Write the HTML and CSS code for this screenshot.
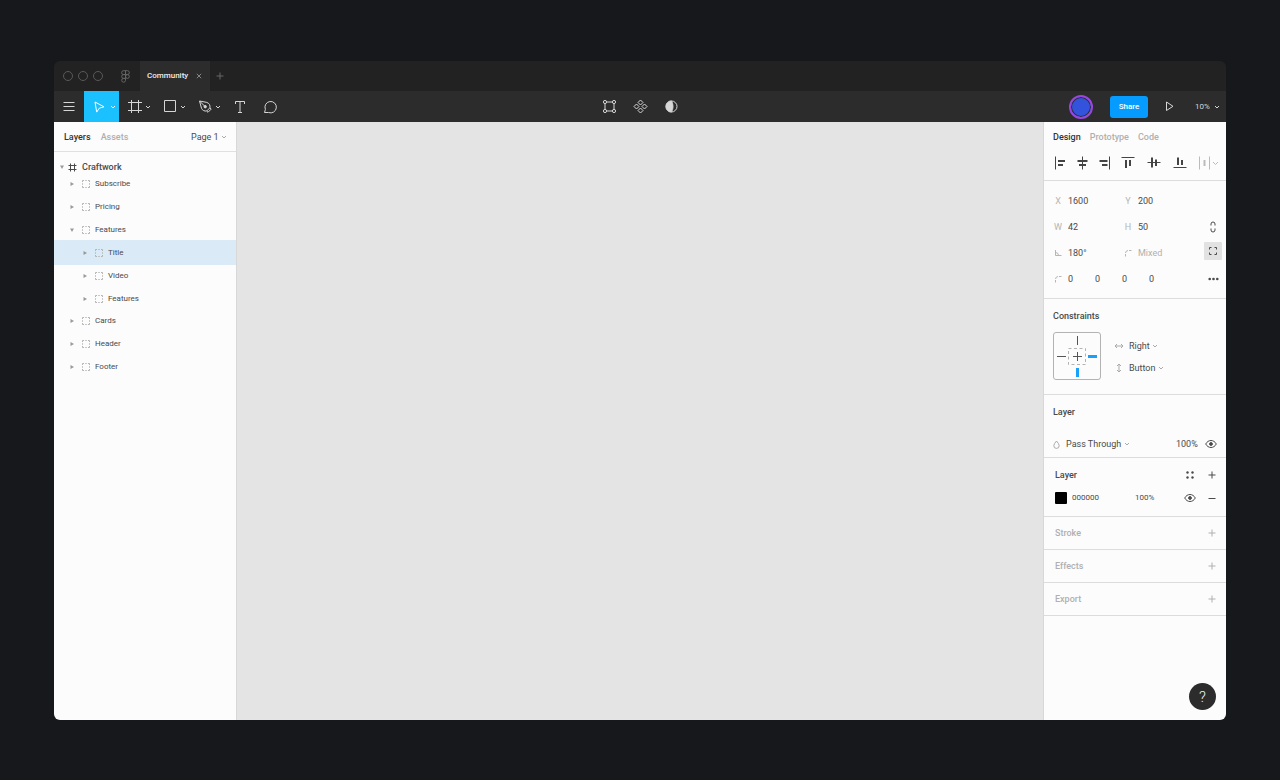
FILE: index.html
```html
<!DOCTYPE html>
<html lang="en">
<head>
<meta charset="utf-8">
<title>Community</title>
<link rel="stylesheet" href="styles.css">
</head>
<body>
<svg class="defs" aria-hidden="true">
  <symbol id="chevron" viewBox="0 0 6 6"><path d="M1 2l2 2 2-2"/></symbol>
  <symbol id="group" viewBox="0 0 10 10"><path d="M1.500 3V1.500H3M4.300 1.500h1.400M7 1.500h1.500V3M8.500 4.300v1.400M8.500 7v1.500H7M5.700 8.500H4.300M3 8.500H1.500V7M1.500 5.700V4.300"/></symbol>
  <symbol id="right" viewBox="0 0 6 6"><path d="M1.500 1l3.500 2-3.500 2z"/></symbol>
  <symbol id="down" viewBox="0 0 6 6"><path d="M1 1.500h4l-2 3.500z"/></symbol>
  <symbol id="eye" viewBox="0 0 12 10"><path d="M.7 5C2 2.700 3.900 1.500 6 1.500S10 2.700 11.300 5C10 7.300 8.100 8.500 6 8.500S2 7.300.7 5z"/><circle cx="6" cy="5" r="1.400" fill="currentColor"/></symbol>
  <symbol id="plus" viewBox="0 0 8 8"><path d="M4 .5v7M.5 4h7"/></symbol>
  <symbol id="corner" viewBox="0 0 8 8"><path d="M1.500 7.500V5M1.500 4Q1.700 1.700 4 1.500M5 1.500h2.500"/></symbol>
</svg>

<main class="window">
  <header class="titlebar">
    <div class="lights"><i></i><i></i><i></i></div>
    <button class="home" aria-label="Home"><svg width="9" height="13" viewBox="0 0 9 13"><path d="M4.500.7H2.600a1.900 1.900 0 0 0 0 3.900h1.900zM4.500.7h1.900a1.900 1.900 0 0 1 0 3.900H4.500zM4.500 4.600H2.600a1.900 1.900 0 0 0 0 3.800h1.900zM2.600 8.400a1.900 1.900 0 1 0 1.900 1.900V8.400z"/><circle cx="6.400" cy="6.500" r="1.900"/></svg></button>
    <div class="tab"><span>Community</span><button aria-label="Close tab"><svg width="6" height="6" viewBox="0 0 6 6"><path d="M.8.8l4.400 4.400M5.200.8L.8 5.200"/></svg></button></div>
    <button class="newtab" aria-label="New tab"><svg width="8" height="8"><use href="#plus"/></svg></button>
  </header>

  <nav class="toolbar">
    <div class="tools">
      <button class="menu" aria-label="Menu"><svg width="12" height="10" viewBox="0 0 12 10"><path d="M.5 .5h11M.5 4.500h11M.5 8.500h11"/></svg></button>
      <button class="tool active" aria-label="Move"><svg width="16" height="16" viewBox="0 0 16 16"><path d="M3 3l9 4.800-4.700 1.400-2.600 3.900z"/></svg><svg width="6" height="6"><use href="#chevron"/></svg></button>
      <button class="tool" aria-label="Frame"><svg width="16" height="16" viewBox="0 0 16 16"><path d="M4.500 1v13M11.500 1v13M1 3.500h14M1 11.500h14"/></svg><svg width="6" height="6"><use href="#chevron"/></svg></button>
      <button class="tool" aria-label="Rectangle"><svg width="16" height="16" viewBox="0 0 16 16"><path d="M2.500 1.500h11v11h-11z"/></svg><svg width="6" height="6"><use href="#chevron"/></svg></button>
      <button class="tool" aria-label="Pen"><svg width="16" height="16" viewBox="0 0 16 16"><path d="M2.500 2l7.300 1.400c2.600.8 3.600 3.200 3.100 5.400L9.700 12c-2.200.4-4.300-.6-5.200-2.700zM2.500 2l5 5M9.700 12l1.300 1.300 3.200-3.200-1.300-1.300"/><circle cx="8.200" cy="7.700" r="1.200" fill="currentColor"/></svg><svg width="6" height="6"><use href="#chevron"/></svg></button>
      <button class="single" aria-label="Text"><svg width="12" height="14" viewBox="0 0 12 14"><path d="M1.500 4V1.500h9V4M6 1.500v11M4 12.500h4"/></svg></button>
      <button class="single" aria-label="Comment"><svg width="15" height="14" viewBox="0 0 15 14"><path d="M1.500 12.500l.9-3.100a5.700 5.700 0 1 1 3.200 3.100z"/></svg></button>
    </div>
    <div class="modes">
      <button aria-label="Edit object"><svg width="15" height="15" viewBox="0 0 15 15"><circle cx="3" cy="3" r="1.600"/><circle cx="12" cy="3" r="1.600"/><circle cx="3" cy="12" r="1.600"/><circle cx="12" cy="12" r="1.600"/><path d="M4.600 3h5.800M4.600 12h5.800M3 4.600v5.800M12 4.600v5.800"/></svg></button>
      <button aria-label="Component"><svg width="15" height="15" viewBox="0 0 15 15"><path d="M7.500 1L10 3.500 7.500 6 5 3.500zM7.500 9l2.500 2.500L7.500 14 5 11.500zM3.500 5L6 7.500 3.500 10 1 7.500zM11.500 5L14 7.500 11.500 10 9 7.500z"/></svg></button>
      <button aria-label="Mask"><svg width="15" height="15" viewBox="0 0 15 15"><circle cx="7.500" cy="7.500" r="5.500"/><path fill="currentColor" d="M7.500 2a5.500 5.500 0 0 0 0 11q1.500-2.500 1.500-5.500t-1.500-5.500z"/></svg></button>
    </div>
    <div class="session">
      <button class="avatar" aria-label="Account"></button>
      <button class="share">Share</button>
      <button class="play" aria-label="Present"><svg width="9" height="11" viewBox="0 0 9 11"><path d="M1.500 1l6.500 4.300-6.500 4.200z"/></svg></button>
      <label class="pick"><select aria-label="Zoom"><option>10%</option></select><svg width="6" height="6"><use href="#chevron"/></svg></label>
    </div>
  </nav>

  <div class="workspace">
    <aside class="layers">
      <div class="layers-head">
        <button class="on">Layers</button><button>Assets</button>
        <label class="pick page"><select aria-label="Page"><option>Page 1</option></select><svg width="6" height="6"><use href="#chevron"/></svg></label>
      </div>
      <div class="root"><svg class="arrow" width="6" height="6"><use href="#down"/></svg><svg width="9" height="9" viewBox="0 0 9 9"><path d="M2.500.5v8M6.500.5v8M.5 2.500h8M.5 6.500h8"/></svg><span>Craftwork</span></div>
      <ul class="tree">
        <li class="row"><svg class="arrow" width="6" height="6"><use href="#right"/></svg><svg class="group" width="10" height="10"><use href="#group"/></svg>Subscribe</li>
        <li class="row"><svg class="arrow" width="6" height="6"><use href="#right"/></svg><svg class="group" width="10" height="10"><use href="#group"/></svg>Pricing</li>
        <li><div class="row"><svg class="arrow" width="6" height="6"><use href="#down"/></svg><svg class="group" width="10" height="10"><use href="#group"/></svg>Features</div>
          <ul class="nested">
            <li class="row selected"><svg class="arrow" width="6" height="6"><use href="#right"/></svg><svg class="group" width="10" height="10"><use href="#group"/></svg>Title</li>
            <li class="row"><svg class="arrow" width="6" height="6"><use href="#right"/></svg><svg class="group" width="10" height="10"><use href="#group"/></svg>Video</li>
            <li class="row"><svg class="arrow" width="6" height="6"><use href="#right"/></svg><svg class="group" width="10" height="10"><use href="#group"/></svg>Features</li>
          </ul>
        </li>
        <li class="row"><svg class="arrow" width="6" height="6"><use href="#right"/></svg><svg class="group" width="10" height="10"><use href="#group"/></svg>Cards</li>
        <li class="row"><svg class="arrow" width="6" height="6"><use href="#right"/></svg><svg class="group" width="10" height="10"><use href="#group"/></svg>Header</li>
        <li class="row"><svg class="arrow" width="6" height="6"><use href="#right"/></svg><svg class="group" width="10" height="10"><use href="#group"/></svg>Footer</li>
      </ul>
    </aside>

    <section class="canvas" aria-label="Canvas"></section>

    <aside class="inspector">
      <section class="top">
        <div class="tabs"><button class="on">Design</button><button>Prototype</button><button>Code</button></div>
        <div class="align">
          <div class="align-x">
            <button aria-label="Align left"><svg width="16" height="16" viewBox="0 0 16 16"><path d="M3.500 1.500v13"/><path class="bar" d="M6 6h7M6 10h5"/></svg></button>
            <button aria-label="Align horizontal centers"><svg width="16" height="16" viewBox="0 0 16 16"><path d="M8.500 1.500v13"/><path class="bar" d="M3.500 6h10M5 10h7"/></svg></button>
            <button aria-label="Align right"><svg width="16" height="16" viewBox="0 0 16 16"><path d="M13.500 1.500v13"/><path class="bar" d="M3.500 6h8M6 10h5.500"/></svg></button>
          </div>
          <div class="align-y">
            <button aria-label="Align top"><svg width="16" height="16" viewBox="0 0 16 16"><path d="M1.500 2.500h13"/><path class="bar" d="M6 5v8M10 5v6"/></svg></button>
            <button aria-label="Align vertical centers"><svg width="16" height="16" viewBox="0 0 16 16"><path d="M1.500 7.500h13"/><path class="bar" d="M6 2.500v10M10 4.500v6.500"/></svg></button>
            <button aria-label="Align bottom"><svg width="16" height="16" viewBox="0 0 16 16"><path d="M1.500 12.500h13"/><path class="bar" d="M6 2.500V10M10 5v5"/></svg></button>
          </div>
          <button class="distribute" aria-label="Distribute"><svg width="24" height="16" viewBox="0 0 24 16"><path d="M3.500 1.500v13M13.500 1.500v13M17 7l2.500 2.500L22 7"/><path class="bar" d="M8.500 5v6"/></svg></button>
        </div>
      </section>

      <section class="fields">
        <div class="fieldrow"><label><span>X</span><input value="1600"></label><label><span>Y</span><input value="200"></label></div>
        <div class="fieldrow"><label><span>W</span><input value="42"></label><label><span>H</span><input value="50"></label>
          <button aria-label="Constrain proportions"><svg width="8" height="12" viewBox="0 0 8 12"><path d="M2 4.500V3a2 2 0 0 1 4 0v1.500M2 7.500V9a2 2 0 0 0 4 0V7.500"/></svg></button></div>
        <div class="fieldrow"><label><span><svg width="8" height="8" viewBox="0 0 8 8"><path d="M1.500 1v5.500h6M1.500 3.500Q4.500 3.500 4.500 6.500"/></svg></span><input aria-label="Rotation" value="180°"></label><label class="mixed"><span><svg width="8" height="8"><use href="#corner"/></svg></span><input aria-label="Corner radius" value="Mixed"></label>
          <button class="pressed" aria-label="Independent corners"><svg width="10" height="10" viewBox="0 0 10 10"><path d="M1.500 3.500v-2h2M6.500 1.500h2v2M8.500 6.500v2h-2M3.500 8.500h-2v-2"/></svg></button></div>
        <div class="fieldrow corners"><label><span><svg width="8" height="8"><use href="#corner"/></svg></span><input aria-label="Top left" value="0"></label><input aria-label="Top right" value="0"><input aria-label="Bottom right" value="0"><input aria-label="Bottom left" value="0">
          <button aria-label="More"><svg width="11" height="4" viewBox="0 0 11 4"><g fill="currentColor" stroke="none"><circle cx="1.700" cy="2" r="1.300"/><circle cx="5.500" cy="2" r="1.300"/><circle cx="9.300" cy="2" r="1.300"/></g></svg></button></div>
      </section>

      <section class="constraints">
        <h2>Constraints</h2>
        <div class="constraint-body">
          <svg width="48" height="48" viewBox="0 0 48 48"><rect x=".5" y=".5" width="47" height="47" rx="2.500" stroke="#b3b3b3"/><rect x="15.500" y="16.500" width="17" height="16" stroke="#b3b3b3" stroke-dasharray="3 2.500"/><path stroke="#555" d="M24.500 4v9M4 24.500h9M24.500 20v9M20 24.500h9"/><path stroke="#18a0fb" stroke-width="3" d="M35 24.500h9M24.500 36v9"/></svg>
          <div class="constraint-picks">
            <label class="pick"><svg class="dim" width="10" height="10" viewBox="0 0 10 10"><path d="M1 5h8M3 3L1 5l2 2M7 3l2 2-2 2"/></svg><select aria-label="Horizontal constraint"><option>Right</option></select><svg width="6" height="6"><use href="#chevron"/></svg></label>
            <label class="pick"><svg class="dim" width="10" height="10" viewBox="0 0 10 10"><path d="M5 1v8M3 3l2-2 2 2M3 7l2 2 2-2"/></svg><select aria-label="Vertical constraint"><option>Button</option></select><svg width="6" height="6"><use href="#chevron"/></svg></label>
          </div>
        </div>
      </section>

      <section class="blend">
        <h2>Layer</h2>
        <div class="blend-row">
          <label class="pick"><svg class="drop" width="7" height="9" viewBox="0 0 7 9"><path d="M3.500 1Q6.200 4 6.200 5.700a2.700 2.700 0 0 1-5.400 0Q.8 4 3.500 1z"/></svg><select aria-label="Blend mode"><option>Pass Through</option></select><svg width="6" height="6"><use href="#chevron"/></svg></label>
          <input aria-label="Layer opacity" value="100%">
          <button aria-label="Toggle visibility"><svg width="12" height="10"><use href="#eye"/></svg></button>
        </div>
      </section>

      <section class="fill">
        <div class="fill-head"><h2>Layer</h2><button aria-label="Styles"><svg width="8" height="8" viewBox="0 0 8 8"><g fill="currentColor" stroke="none"><circle cx="1.500" cy="1.500" r="1.200"/><circle cx="6.500" cy="1.500" r="1.200"/><circle cx="1.500" cy="6.500" r="1.200"/><circle cx="6.500" cy="6.500" r="1.200"/></g></svg></button><button aria-label="Add fill"><svg width="8" height="8"><use href="#plus"/></svg></button></div>
        <div class="fill-row"><button class="swatch" aria-label="Fill color"></button><input class="hex" aria-label="Hex" value="000000"><input class="alpha" aria-label="Fill opacity" value="100%"><button aria-label="Toggle fill"><svg width="12" height="10"><use href="#eye"/></svg></button><button aria-label="Remove fill"><svg width="8" height="8" viewBox="0 0 8 8"><path d="M.5 4.500h7"/></svg></button></div>
      </section>

      <section class="empty"><h2>Stroke</h2><button aria-label="Add stroke"><svg width="8" height="8"><use href="#plus"/></svg></button></section>
      <section class="empty"><h2>Effects</h2><button aria-label="Add effect"><svg width="8" height="8"><use href="#plus"/></svg></button></section>
      <section class="empty"><h2>Export</h2><button aria-label="Add export"><svg width="8" height="8"><use href="#plus"/></svg></button></section>
    </aside>
    <button class="help">?</button>
  </div>
</main>
</body>
</html>
```

FILE: styles.css
```css
* { box-sizing: border-box; margin: 0; padding: 0; }

body {
  display: flex;
  min-height: 100vh;
  padding: 61px 54px 60px;
  background: #17181c;
  color: #4a4a4a;
  font: 9px/16px Roboto, sans-serif;
}

button, input, select {
  font: inherit;
  color: inherit;
  background: none;
  border: 0;
  appearance: none;
}
input { min-width: 0; }
button { display: flex; align-items: center; justify-content: center; }
h2 { font: 500 9px/16px Roboto, sans-serif; }
ul { list-style: none; }
svg { flex: none; fill: none; stroke: currentColor; }
.defs { position: absolute; width: 0; height: 0; }

.window {
  flex: 1;
  display: flex;
  flex-direction: column;
  border-radius: 6px;
  overflow: hidden;
}

.titlebar { display: flex; height: 30px; background: #222; color: #666; }
.lights { display: flex; align-items: center; gap: 5px; padding-left: 9px; }
.lights i { width: 10px; height: 10px; border: 1px solid #595959; border-radius: 50%; }
.home { width: 37px; padding-left: 7px; }
.tab {
  display: flex;
  align-items: center;
  gap: 8px;
  width: 70px;
  padding-left: 7px;
  background: #2c2c2c;
  color: #eee;
  font-size: 8px;
  font-weight: 500;
}
.tab button { color: #888; }
.newtab { width: 19px; }

.toolbar {
  display: grid;
  grid-template-columns: 1fr auto 1fr;
  height: 31px;
  background: #2c2c2c;
  color: #d6d6d6;
}
.tools { display: flex; }
.menu { width: 30px; }
.tool { width: 35px; gap: 2px; padding-left: 5px; }
.tool.active { background: #1bc0ff; color: #fff; }
.single { width: 31px; }
.modes { display: flex; }
.modes button { width: 31px; }
.session { display: flex; align-items: center; justify-content: flex-end; padding-right: 6px; font-size: 8px; }
.avatar {
  width: 24px;
  height: 24px;
  margin-right: 17px;
  border: 2px solid #9747dd;
  border-radius: 50%;
  background: #3453dd;
  box-shadow: inset 0 0 0 1px #2c2c2c;
}
.share {
  width: 38px;
  height: 22px;
  border-radius: 3px;
  background: #069cff;
  color: #fff;
  font-weight: 500;
}
.play { width: 42px; height: 22px; }
.session .pick { margin-left: 5px; gap: 4px; }

.pick { display: flex; align-items: center; gap: 2px; }
.pick select { line-height: 16px; }

.workspace { position: relative; flex: 1; display: flex; }

.layers { width: 183px; background: #fcfcfc; border-right: 1px solid #d8d8d8; }
.layers-head {
  display: flex;
  align-items: center;
  gap: 10px;
  height: 30px;
  padding: 0 9px 0 10px;
  border-bottom: 1px solid #e0e0e0;
  color: #b0b0b0;
}
.layers-head button, .tabs button { font-weight: 500; }
.layers-head .on, .tabs .on { color: #333; }
.page { margin-left: auto; color: #4a4a4a; }
.page svg { color: #999; }
.root {
  display: flex;
  align-items: center;
  height: 10px;
  margin-top: 10px;
  padding-left: 5px;
  gap: 3px;
  font-weight: 500;
}
.root span { margin-left: 2px; }
.tree { font-size: 8px; }
.row { display: flex; align-items: center; height: 23px; padding-left: 15px; gap: 6px; }
.group { color: #b4b4b4; margin-right: -2px; }
.arrow { fill: #999; stroke: none; }
.nested { margin-bottom: -1px; }
.nested .row { padding-left: 28px; }
.nested .selected { height: 25px; margin: -1px 0; background: #daebf7; }

.canvas { flex: 1; background: #e4e4e4; }

.inspector { width: 183px; background: #fcfcfc; border-left: 1px solid #d8d8d8; }
.inspector section { border-bottom: 1px solid #dcdcdc; }
.tabs { display: flex; gap: 9px; height: 30px; padding-left: 9px; color: #b0b0b0; }
.align { display: flex; gap: 8px; height: 22px; margin-bottom: 6px; padding-left: 8px; color: #444; }
.align-x { display: flex; gap: 6px; }
.align-y { display: flex; gap: 10px; }
.bar { stroke-width: 2; }
.distribute { color: #bbb; }

.fields { padding: 7px 4px 6px 9px; }
.fieldrow { display: flex; align-items: center; height: 26px; }
.fieldrow label { display: flex; align-items: center; gap: 5px; width: 70px; }
.fieldrow span { display: flex; justify-content: center; width: 10px; color: #b5b5b5; }
.fieldrow label input { width: 50px; }
.fieldrow > button { width: 18px; height: 18px; margin-left: auto; border-radius: 1px; }
.fieldrow .pressed { margin-bottom: 5px; background: #e2e2e2; }
.fieldrow .mixed { color: #b0b0b0; }
.corners label { width: 42px; }
.corners label input, .corners > input { width: 27px; }

.constraints { padding: 9px 9px 14px; }
.constraint-body { display: flex; align-items: center; gap: 13px; margin-top: 8px; }
.constraint-picks { padding-top: 2px; }
.constraint-picks .pick { height: 22px; }
.constraint-picks select { margin-left: 3px; }
.dim, .drop, .pick select + svg { color: #aaa; }
.session .pick select + svg { color: inherit; }

.blend { padding: 9px 9px 5px; }
.blend-row { display: flex; align-items: center; margin-top: 16px; }
.blend-row select { margin-left: 4px; }
.blend-row input { width: 24px; margin-left: auto; margin-right: 5px; }

.fill { padding: 9px 10px 10px 11px; }
.fill-head { display: flex; gap: 14px; }
.fill-head h2 { flex: 1; }
.fill-row { display: flex; align-items: center; margin-top: 7px; font-size: 8px; }
.swatch { width: 12px; height: 12px; border-radius: 1px; background: #000; }
.hex { width: 60px; margin-left: 5px; }
.alpha { flex: 1; margin-left: 3px; }
.fill-row button + button { margin-left: 12px; }

.empty { display: flex; justify-content: space-between; height: 33px; padding: 8px 10px 8px 11px; color: #b0b0b0; }

.help {
  position: absolute;
  right: 10px;
  bottom: 10px;
  width: 27px;
  height: 27px;
  border-radius: 50%;
  background: #2c2c2c;
  color: #eee;
  font-size: 15px;
  font-weight: 300;
}
```
